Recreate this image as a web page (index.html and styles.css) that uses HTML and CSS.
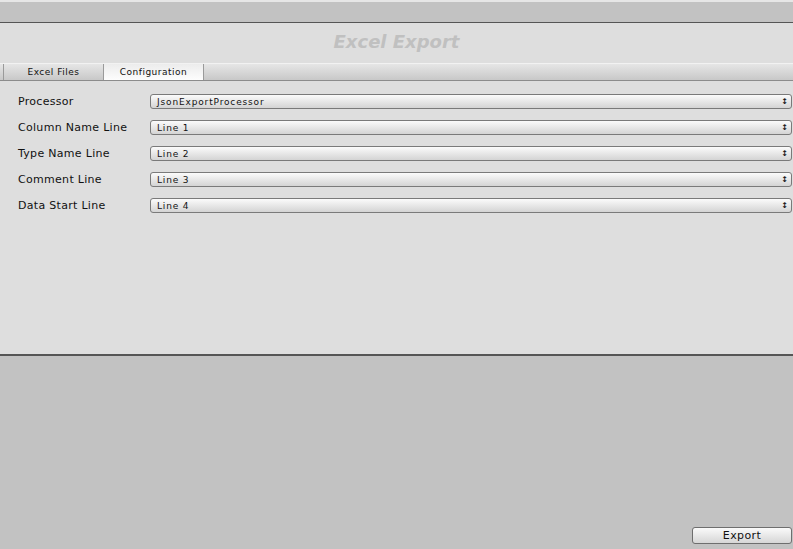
FILE: index.html
```html
<!DOCTYPE html>
<html>
<head>
<meta charset="utf-8">
<link rel="stylesheet" href="styles.css">
</head>
<body>
<div class="window">
  <div class="toolbar"></div>
  <div class="panel">
    <div class="title">Excel Export</div>
    <div class="tabbar">
      <div class="tab">Excel Files</div>
      <div class="tab active">Configuration</div>
    </div>
    <div class="form">
      <div class="row"><div class="label">Processor</div><div class="select"><span>JsonExportProcessor</span><span class="arrow">&#x2195;</span></div></div>
      <div class="row"><div class="label">Column Name Line</div><div class="select"><span>Line 1</span><span class="arrow">&#x2195;</span></div></div>
      <div class="row"><div class="label">Type Name Line</div><div class="select"><span>Line 2</span><span class="arrow">&#x2195;</span></div></div>
      <div class="row"><div class="label">Comment Line</div><div class="select"><span>Line 3</span><span class="arrow">&#x2195;</span></div></div>
      <div class="row"><div class="label">Data Start Line</div><div class="select"><span>Line 4</span><span class="arrow">&#x2195;</span></div></div>
    </div>
  </div>
  <div class="bottom">
    <button class="export">Export</button>
  </div>
</div>
</body>
</html>
```
FILE: styles.css
```css
html, body {
  margin: 0;
  padding: 0;
  width: 793px;
  height: 549px;
  overflow: hidden;
  background: #c2c2c2;
  font-family: "DejaVu Sans", sans-serif;
}
.window {
  display: flex;
  flex-direction: column;
  height: 549px;
}
.toolbar {
  height: 20px;
  border-top: 2px solid #e6e6e6;
  background: #c2c2c2;
  border-bottom: 1px solid #555;
}
.panel {
  height: 331px;
  background: #dedede;
  border-bottom: 2px solid #555;
  display: flex;
  flex-direction: column;
}
.title {
  height: 40px;
  text-align: center;
  font-size: 18px;
  font-weight: bold;
  font-style: italic;
  color: #c0c0c0;
  line-height: 37px;
}
.tabbar {
  height: 16px;
  border-top: 1px solid #f2f2f2;
  border-bottom: 1px solid #8c8c8c;
  background: linear-gradient(#e6e6e6, #c8c8c8);
  display: flex;
  padding-left: 3px;
}
.tab {
  width: 99px;
  border-left: 1px solid #9a9a9a;
  font-size: 9px;
  letter-spacing: 0.5px;
  text-align: center;
  line-height: 17px;
  color: #111;
}
.tab.active {
  background: linear-gradient(#ececec, #fdfdfd);
  border-right: 1px solid #9a9a9a;
}
.form {
  display: flex;
  flex-direction: column;
  gap: 11px;
  padding: 13px 1px 0 18px;
}
.row {
  display: flex;
  align-items: center;
  height: 15px;
}
.label {
  width: 132px;
  font-size: 11px;
  letter-spacing: 0.3px;
  color: #111;
}
.select {
  flex: 1;
  height: 13px;
  border: 1px solid #7a7a7a;
  border-radius: 3px;
  background: linear-gradient(#fbfbfb, #d4d4d4);
  display: flex;
  justify-content: space-between;
  align-items: center;
  padding: 0 3px 0 6px;
  font-size: 9px;
  letter-spacing: 0.85px;
  color: #111;
}
.arrow {
  font-size: 8px;
  font-weight: bold;
  letter-spacing: 0;
}
.bottom {
  flex: 1;
  display: flex;
  justify-content: flex-end;
  align-items: flex-end;
  padding: 0 1px 5px 0;
}
.export {
  width: 100px;
  height: 17px;
  border: 1px solid #6e6e6e;
  border-radius: 3px;
  background: linear-gradient(#fafafa, #d6d6d6);
  font-family: "DejaVu Sans", sans-serif;
  font-size: 11px;
  letter-spacing: 0.4px;
  color: #111;
  padding: 0;
  line-height: 15px;
}
```
